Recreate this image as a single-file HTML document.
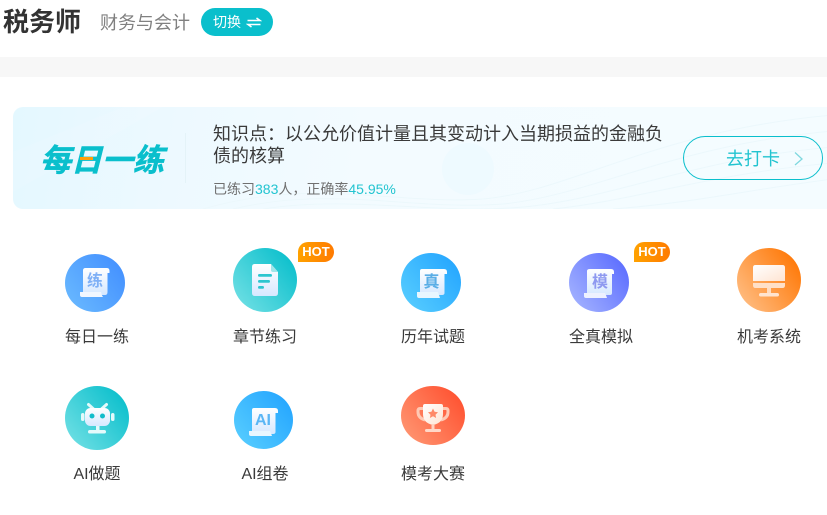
<!DOCTYPE html>
<html lang="zh-CN">
<head>
<meta charset="utf-8">
<title>税务师</title>
<style>
html,body{margin:0;padding:0;background:#fff;}
body{width:827px;height:515px;overflow:hidden;position:relative;font-family:"Liberation Sans","Noto Sans CJK SC",sans-serif;color:#333;}
.a{position:absolute;white-space:nowrap;}
.lb{position:absolute;white-space:nowrap;font-size:16px;line-height:22px;width:120px;text-align:center;color:#3a3a3a;}
.hot{position:absolute;top:242px;width:36px;height:20px;border-radius:10px 10px 10px 0;background:linear-gradient(90deg,#ffa200,#ff7a00);color:#fff;font-size:13px;font-weight:bold;line-height:20px;text-align:center;}
</style>
</head>
<body>
<div class="a" style="left:3px;top:4px;font-size:26px;font-weight:bold;line-height:36px;color:#333;">税务师</div>
<div class="a" style="left:100px;top:10px;font-size:18px;line-height:26px;color:#808080;">财务与会计</div>
<div class="a" style="left:201px;top:8px;width:72px;height:28px;border-radius:14px;background:#0abfcc;"></div>
<div class="a" style="left:213px;top:12px;font-size:14px;line-height:20px;color:#fff;">切换</div>
<svg class="a" style="left:246px;top:15px" width="16" height="14" viewBox="0 0 16 14"><path d="M1.500 5.500H14L10.500 3M14.500 9.500H2L5.500 12" fill="none" stroke="#fff" stroke-width="1.600"/></svg>

<div class="a" style="left:0;top:57px;width:827px;height:20px;background:#f7f7f7;"></div>

<div class="a" style="left:13px;top:107px;width:830px;height:102px;border-radius:10px;overflow:hidden;background:linear-gradient(100deg,#e4f8ff 0,#edf9ff 20%,#f3fbff 42%,#f4fcff 100%);">
<svg width="830" height="102" style="position:absolute;left:0;top:0">
<path d="M0 45L110 0H150L0 85Z" fill="#fff" opacity=".1"/>
<circle cx="455" cy="62" r="26" fill="#eefaff"/>
<g fill="none" stroke="#ecf8fc" stroke-width="1">
<path d="M190 102C300 70 380 98 470 92C560 84 640 24 820 8"/>
<path d="M220 102C320 78 400 104 490 97C580 88 660 38 820 24"/>
<path d="M250 102C340 88 420 108 510 100C600 92 680 52 820 40"/>
<path d="M540 102C620 94 700 66 820 56"/>
<path d="M600 102C680 96 740 82 820 72"/>
</g>
</svg>
</div>
<div class="a" style="left:185px;top:133px;width:1px;height:50px;background:#e4f3f8;"></div>
<div class="a" style="left:40px;top:140px;font-size:31px;font-weight:bold;font-style:italic;line-height:42px;color:#0abfcc;-webkit-text-stroke:.6px #0abfcc;">每日一练</div>
<div class="a" style="left:80px;top:157px;width:13px;height:3px;background:#ff9f0a;"></div>

<div class="a" style="left:213px;top:123px;width:460px;white-space:normal;font-size:18px;line-height:22px;color:#3a3a3a;">知识点：以公允价值计量且其变动计入当期损益的金融负<br>债的核算</div>
<div class="a" style="left:213px;top:179px;font-size:14px;line-height:20px;color:#707070;">已练习<span style="color:#22c4d0">383</span>人，正确率<span style="color:#22c4d0">45.95%</span></div>

<div class="a" style="left:683px;top:136px;width:138px;height:42px;border:1px solid #0abfcc;border-radius:22px;"></div>
<div class="a" style="left:726px;top:147px;font-size:18px;line-height:25px;color:#22c4d0;">去打卡</div>
<svg class="a" style="left:792px;top:151px" width="12" height="15" viewBox="0 0 12 15"><path d="M3 1.500L10 8L3 14" fill="none" stroke="#7fd8df" stroke-width="1.300"/></svg>

<svg class="a" style="left:0;top:0" width="827" height="515" viewBox="0 0 827 515" font-family="'Liberation Sans','Noto Sans CJK SC',sans-serif">
<defs>
<linearGradient id="g1" x1="0" y1="1" x2="1" y2="0.300"><stop offset="0" stop-color="#6cbcff"/><stop offset="1" stop-color="#4592ff"/></linearGradient>
<linearGradient id="g2" x1="0" y1="1" x2="1" y2="0.200"><stop offset="0" stop-color="#78e2e6"/><stop offset="1" stop-color="#0abfcc"/></linearGradient>
<linearGradient id="g3" x1="0" y1="1" x2="1" y2="0.200"><stop offset="0" stop-color="#5bd0ff"/><stop offset="1" stop-color="#25a6ff"/></linearGradient>
<linearGradient id="g4" x1="0" y1="1" x2="1" y2="0.300"><stop offset="0" stop-color="#a9b8ff"/><stop offset="1" stop-color="#5f70ff"/></linearGradient>
<linearGradient id="g5" x1="0" y1="1" x2="1" y2="0.300"><stop offset="0" stop-color="#ffc48f"/><stop offset="1" stop-color="#ff7a0a"/></linearGradient>
<linearGradient id="g6" x1="0" y1="1" x2="1" y2="0.300"><stop offset="0" stop-color="#ff9c78"/><stop offset="1" stop-color="#ff5433"/></linearGradient>
<linearGradient id="p" x1="0" y1="0" x2="0" y2="1"><stop offset="0" stop-color="#fff"/><stop offset="1" stop-color="#d6e8ff"/></linearGradient>
<linearGradient id="w" x1="0" y1="0" x2="1" y2="1"><stop offset="0" stop-color="#fff"/><stop offset="1" stop-color="#ffe4d2"/></linearGradient>
</defs>

<!-- 每日一练 -->
<ellipse cx="95" cy="283" rx="30" ry="29" fill="url(#g1)"/>
<path d="M85.500 268H107Q109.500 268 109.500 271V273H107.500V292Q107.500 295 105 295H85.500Q83 295 83 292V270.500Q83 268 85.500 268Z" fill="url(#p)"/>
<path d="M80 292H101Q101.500 295 103 297H82Q80 297 80 295Z" fill="#f1f7ff"/>
<text x="95" y="286" font-size="16" font-weight="bold" text-anchor="middle" fill="#7fb0f6">练</text>

<!-- 章节练习 -->
<circle cx="265" cy="280" r="32" fill="url(#g2)"/>
<path d="M254.500 264H271L278 272V293Q278 296 275 296H255Q252 296 252 293V267Q252 264 254.500 264Z" fill="url(#p)"/>
<path d="M271 264L278 272H273Q271 272 271 270Z" fill="#9fe6ea"/>
<rect x="258" y="274" width="14" height="2.800" rx="1.400" fill="#2cc6d0"/>
<rect x="258" y="280" width="12" height="2.800" rx="1.400" fill="#2cc6d0"/>
<rect x="258" y="286" width="6" height="2.800" rx="1.400" fill="#2cc6d0"/>

<!-- 历年试题 -->
<ellipse cx="431" cy="282.500" rx="30" ry="29.500" fill="url(#g3)"/>
<path d="M422 269H444Q447 269 447 272V274H444.500V293Q444.500 295 442 295H422Q420 295 420 293V271Q420 269 422 269Z" fill="url(#p)"/>
<path d="M417 292H438Q439 295 440 298H419Q417 298 417 296Z" fill="#e8f6ff"/>
<text x="431.500" y="287" font-size="16" font-weight="bold" text-anchor="middle" fill="#5aaee6">真</text>

<!-- 全真模拟 -->
<ellipse cx="599" cy="282.500" rx="30" ry="29.500" fill="url(#g4)"/>
<path d="M590 269H611Q614 269 614 272V274H612V293Q612 295 610 295H590Q587 295 587 293V271Q587 269 590 269Z" fill="url(#p)"/>
<path d="M584 293H605Q606 295 607 298H586Q584 298 584 296Z" fill="#eef1ff"/>
<text x="600" y="287" font-size="16" font-weight="bold" text-anchor="middle" fill="#8e99f0">模</text>

<!-- 机考系统 -->
<circle cx="769" cy="280" r="32" fill="url(#g5)"/>
<path d="M755.500 265H782.500Q785 265 785 267.500V281H753V267.500Q753 265 755.500 265Z" fill="url(#w)"/>
<path d="M753 283H785V285.500Q785 288 782.500 288H755.500Q753 288 753 285.500Z" fill="#ffe0c8"/>
<rect x="767" y="288" width="4" height="6" fill="#ffdcc0"/>
<rect x="759" y="293" width="20" height="3.500" rx="1.750" fill="#ffe4d0"/>

<!-- AI做题 -->
<circle cx="97" cy="418" r="32" fill="url(#g2)"/>
<path d="M93.500 409L88.500 404.500M101.500 409L106.500 404.500" stroke="#e3fafb" stroke-width="3" stroke-linecap="round"/>
<rect x="81" y="413" width="3.500" height="8" rx="1.750" fill="#e3fafb"/>
<rect x="111" y="413" width="3.500" height="8" rx="1.750" fill="#e3fafb"/>
<rect x="85" y="408" width="25" height="18" rx="5.500" fill="url(#p)"/>
<circle cx="92" cy="416" r="2.500" fill="#12bdcb"/>
<circle cx="102.500" cy="416" r="2.500" fill="#12bdcb"/>
<rect x="96" y="426" width="3.500" height="5" fill="#e3fafb"/>
<rect x="88" y="430" width="18" height="3.500" rx="1.750" fill="#e3fafb"/>

<!-- AI组卷 -->
<ellipse cx="263.500" cy="420" rx="29.500" ry="29" fill="url(#g3)"/>
<path d="M254 408H275Q278 408 278 411V413H275.500V432Q275.500 434 273 434H254Q252 434 252 432V410Q252 408 254 408Z" fill="url(#p)"/>
<path d="M249 431H270Q271 433 272 436H251Q249 436 249 434Z" fill="#e8f6ff"/>
<text x="263" y="425" font-size="16" font-weight="bold" text-anchor="middle" fill="#5ab6f5">AI</text>

<!-- 模考大赛 -->
<ellipse cx="433" cy="415.500" rx="32" ry="29.500" fill="url(#g6)"/>
<path d="M423 408.500H420Q418 408.500 418 411V412Q418 418 425 420M443 408.500H446Q448 408.500 448 411V412Q448 418 441 420" fill="none" stroke="#ffc9b4" stroke-width="3"/>
<path d="M425 404H441Q443 404 443 406V414Q443 423 433 425Q423 423 423 414V406Q423 404 425 404Z" fill="url(#w)"/>
<path d="M433 408.500L434.600 411.800L438 412.300L435.500 414.700L436.100 418L433 416.300L429.900 418L430.500 414.700L428 412.300L431.400 411.800Z" fill="#ff8a68"/>
<rect x="431.500" y="424" width="3" height="5" fill="#ffd2c0"/>
<rect x="425" y="429" width="16" height="3" rx="1.500" fill="#ffd8c8"/>
</svg>

<div class="hot" style="left:298px;">HOT</div>
<div class="hot" style="left:634px;">HOT</div>

<div class="lb" style="left:37px;top:327px;">每日一练</div>
<div class="lb" style="left:205px;top:327px;">章节练习</div>
<div class="lb" style="left:373px;top:327px;">历年试题</div>
<div class="lb" style="left:541px;top:327px;">全真模拟</div>
<div class="lb" style="left:709px;top:327px;">机考系统</div>
<div class="lb" style="left:37px;top:464px;">AI做题</div>
<div class="lb" style="left:205px;top:464px;">AI组卷</div>
<div class="lb" style="left:373px;top:464px;">模考大赛</div>
</body>
</html>
